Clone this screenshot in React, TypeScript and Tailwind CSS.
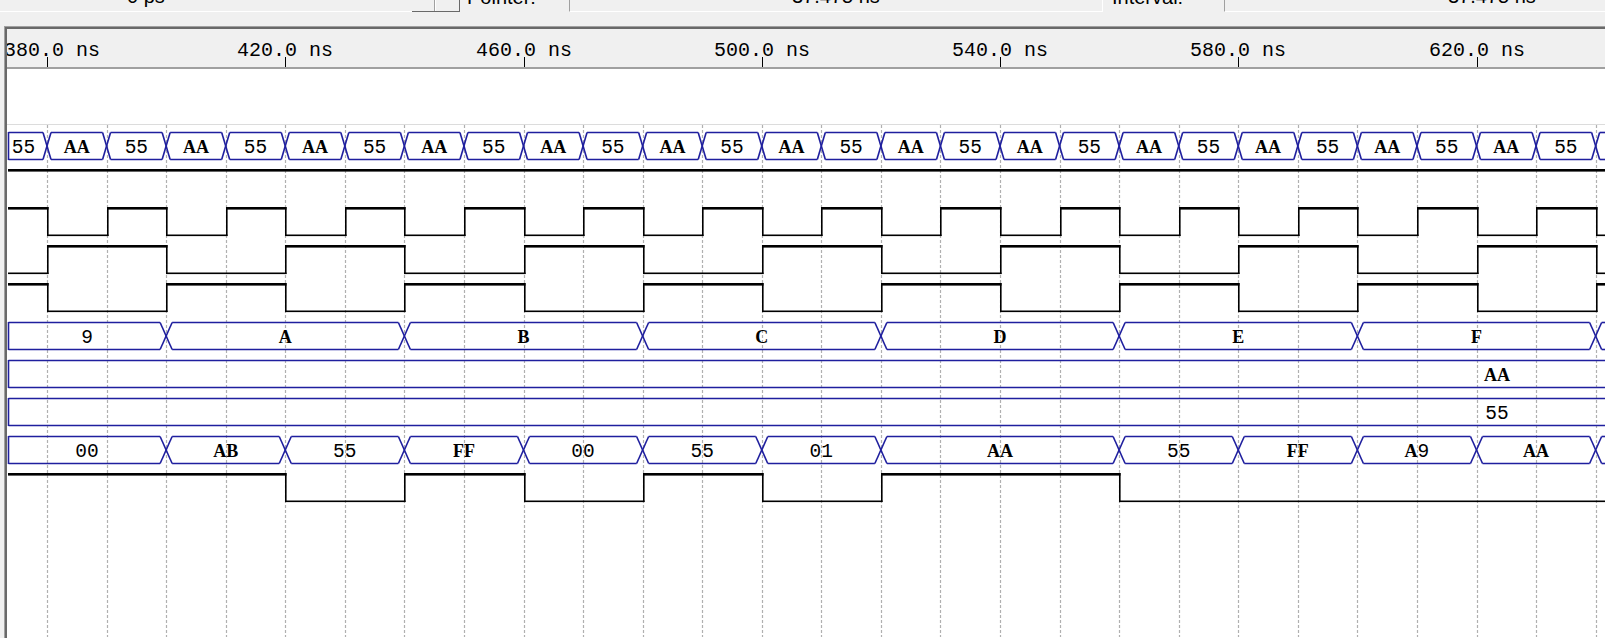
import React from "react";

const K = 238.25 / 40; // px per ns
const T0 = 47; // page x of 380 ns
const xOf = (ns: number) => T0 + (ns - 380) * K;

const CL = 7; // content left (page)
const CT = 70; // canvas top (page)
const PW = 1605;
const CW = PW - CL;
const CH = 638 - CT;
const LEFT = 8; // page x where waveforms start

const BLUE = "#1f1f9e";

type Seg = { a: number; b: number; v: string };

function mkSegs(list: [number, string][], endNs: number): Seg[] {
  const out: Seg[] = [];
  for (let i = 0; i < list.length; i++) {
    const a = list[i][0];
    const b = i + 1 < list.length ? list[i + 1][0] : endNs;
    out.push({ a, b, v: list[i][1] });
  }
  return out;
}

const row0: [number, string][] = [[-Infinity, "55"]];
for (let k = 0; k < 28; k++) row0.push([380 + 10 * k, k % 2 === 0 ? "AA" : "55"]);

const row5: [number, string][] = [
  [-Infinity, "9"],
  [400, "A"],
  [440, "B"],
  [480, "C"],
  [520, "D"],
  [560, "E"],
  [600, "F"],
  [640, "0"],
];

const row8: [number, string][] = [
  [-Infinity, "00"],
  [400, "AB"],
  [420, "55"],
  [440, "FF"],
  [460, "00"],
  [480, "55"],
  [500, "01"],
  [520, "AA"],
  [560, "55"],
  [580, "FF"],
  [600, "A9"],
  [620, "AA"],
  [640, "55"],
];

function Label({ x, y, text }: { x: number; y: number; text: string }) {
  return (
    <text x={x} y={y} textAnchor="middle" fill="#000" fontSize={19.5}>
      {text.split("").map((c, i) =>
        /[A-Z]/.test(c) ? (
          <tspan key={i} fontFamily="'Liberation Serif', serif" fontSize={18} fontWeight={700}>
            {c}
          </tspan>
        ) : (
          <tspan key={i} fontFamily="'Liberation Mono', monospace">
            {c}
          </tspan>
        )
      )}
    </text>
  );
}

function Bus({
  top,
  list,
  endNs,
  h,
  constLabelX,
}: {
  top: number;
  list: [number, string][];
  endNs: number;
  h: number;
  constLabelX?: number;
}) {
  const segs = mkSegs(list, endNs);
  const bot = top + 27;
  const mid = (top + bot) / 2;
  const lines: React.ReactNode[] = [];
  const labels: React.ReactNode[] = [];
  const ox = -CL;
  const oy = -CT;
  segs.forEach((s, i) => {
    const leftIsEdge = !isFinite(s.a) || xOf(s.a) <= LEFT;
    const xa = leftIsEdge ? LEFT : xOf(s.a);
    const xb = Math.min(xOf(s.b), PW + 20);
    if (xa > PW + 10) return;
    const la = leftIsEdge ? xa + 0.5 : xa + h;
    const lb = xb - h;
    lines.push(
      <line key={`t${i}`} x1={la + ox} y1={top + 0.5 + oy} x2={lb + ox} y2={top + 0.5 + oy} />,
      <line key={`b${i}`} x1={la + ox} y1={bot + 0.5 + oy} x2={lb + ox} y2={bot + 0.5 + oy} />
    );
    if (leftIsEdge) {
      lines.push(
        <line key={`e${i}`} x1={LEFT + 0.5 + ox} y1={top + oy} x2={LEFT + 0.5 + ox} y2={bot + 1 + oy} />
      );
    } else {
      lines.push(
        <line key={`x1${i}`} x1={xa - h + ox} y1={top + 0.5 + oy} x2={xa + h + ox} y2={bot + 0.5 + oy} />,
        <line key={`x2${i}`} x1={xa - h + ox} y1={bot + 0.5 + oy} x2={xa + h + ox} y2={top + 0.5 + oy} />
      );
    }
    const visA = Math.max(xa, LEFT);
    const visB = Math.min(xb, PW);
    if (constLabelX !== undefined) {
      labels.push(<Label key={`l${i}`} x={constLabelX + ox} y={mid + 7 + oy} text={s.v} />);
    } else if (visB - visA > 30) {
      let cx = (visA + visB) / 2;
      if (leftIsEdge && visB - visA < 60) cx -= 4;
      labels.push(<Label key={`l${i}`} x={cx + ox} y={mid + 7 + oy} text={s.v} />);
    }
  });
  return (
    <g>
      <g stroke={BLUE} strokeWidth={1.6} fill="none">
        {lines}
      </g>
      {labels}
    </g>
  );
}

function Bit({ high, low, fn }: { high: number; low: number; fn: (ns: number) => boolean }) {
  const ox = -CL;
  const oy = -CT;
  const pts: { x1: number; x2: number; v: boolean }[] = [];
  let start = LEFT;
  let cur = fn(375);
  for (let ns = 380; ns <= 660; ns += 10) {
    const v = fn(ns + 5);
    if (v !== cur) {
      const x = Math.round(xOf(ns));
      pts.push({ x1: start, x2: x, v: cur });
      start = x;
      cur = v;
    }
  }
  pts.push({ x1: start, x2: PW + 5, v: cur });
  const els: React.ReactNode[] = [];
  pts.forEach((p, i) => {
    if (p.v) {
      els.push(
        <rect key={`h${i}`} x={p.x1 + ox} y={high - 1 + oy} width={p.x2 - p.x1 + 1.5} height={2.6} fill="#000" />
      );
    } else {
      els.push(
        <rect key={`l${i}`} x={p.x1 + ox} y={low - 0.5 + oy} width={p.x2 - p.x1 + 1.5} height={1.6} fill="#000" />
      );
    }
    if (i > 0) {
      els.push(
        <rect key={`v${i}`} x={p.x1 + ox} y={high - 1 + oy} width={1.6} height={low - high + 2} fill="#000" />
      );
    }
  });
  return <g>{els}</g>;
}

function Canvas() {
  const ox = -CL;
  const oy = -CT;
  const grid: number[] = [];
  for (let k = -1; k < 28; k++) {
    const x = Math.round(xOf(380 + 10 * k));
    if (x > LEFT && x < PW) grid.push(x);
  }
  return (
    <svg width={CW} height={CH} className="block" shapeRendering="geometricPrecision">
      <line x1={0} y1={125.5 + oy} x2={CW} y2={125.5 + oy} stroke="#dcdcdc" strokeWidth={1} />
      <g stroke="#b0b0b0" strokeWidth={1.2} strokeDasharray="3 2">
        {grid.map((x) => (
          <line key={x} x1={x + 0.5 + ox} y1={126 + oy} x2={x + 0.5 + ox} y2={CH} />
        ))}
      </g>
      <Bus top={133} list={row0} endNs={700} h={4} />
      <rect x={LEFT + ox} y={170 + oy} width={PW} height={2.6} fill="#000" />
      <Bit high={209} low={236} fn={(ns) => (ns > 380 ? Math.floor((ns - 380) / 10) % 2 !== 0 : true)} />
      <Bit high={247} low={274} fn={(ns) => ns > 380 && Math.floor((ns - 380) / 20) % 2 === 0} />
      <Bit high={285} low={312} fn={(ns) => !(ns > 380 && Math.floor((ns - 380) / 20) % 2 === 0)} />
      <Bus top={323} list={row5} endNs={700} h={6} />
      <Bus top={361} list={[[-Infinity, "AA"]]} endNs={900} h={6} constLabelX={1497} />
      <Bus top={399} list={[[-Infinity, "55"]]} endNs={900} h={6} constLabelX={1497} />
      <Bus top={437} list={row8} endNs={700} h={6} />
      <Bit
        high={475}
        low={502}
        fn={(ns) =>
          ns < 420 || (ns > 440 && ns < 460) || (ns > 480 && ns < 500) || (ns > 520 && ns < 560)
        }
      />
    </svg>
  );
}

function Ruler() {
  const labels = [380, 420, 460, 500, 540, 580, 620];
  const ox = -CL;
  return (
    <svg width={CW} height={38} className="block">
      {labels.map((ns, i) => {
        const x = Math.round(xOf(ns));
        const start = i === 0 ? 4 : x - 48;
        return (
          <g key={ns}>
            <text
              x={start + ox}
              y={27}
              fontFamily="'Liberation Mono', monospace"
              fontSize={20}
              fill="#000"
            >
              {ns}.0 ns
            </text>
            <line x1={x + 0.5 + ox} y1={28} x2={x + 0.5 + ox} y2={38} stroke="#000" strokeWidth={1} />
          </g>
        );
      })}
    </svg>
  );
}

function Toolbar() {
  return (
    <div className="h-[26px] shrink-0 flex flex-col">
      <div className="h-[12px] flex items-stretch overflow-hidden font-['Liberation_Sans',Arial,sans-serif] text-[20px] text-black">
        <div className="w-[412px] border-b border-white relative overflow-hidden">
          <div className="absolute left-[127px] bottom-[5px] leading-[20px] whitespace-nowrap">0 ps</div>
        </div>
        <div className="w-[48px] flex border-r border-b border-[#696969]">
          <div className="w-[23px] border-r border-[#a0a0a0] bg-[#f0f0f0]" />
          <div className="flex-1 border-l border-white bg-[#f0f0f0]" />
        </div>
        <div className="w-[109px] relative overflow-hidden">
          <div className="absolute left-[7px] bottom-[5px] leading-[20px] whitespace-nowrap">Pointer:</div>
        </div>
        <div className="w-[534px] border-l border-[#a0a0a0] border-b border-r border-b-white border-r-white relative overflow-hidden">
          <div className="absolute left-[222px] bottom-[5px] leading-[20px] whitespace-nowrap">37.475 ns</div>
        </div>
        <div className="w-[121px] relative overflow-hidden">
          <div className="absolute left-[9px] bottom-[5px] leading-[20px] whitespace-nowrap">Interval:</div>
        </div>
        <div className="flex-1 border-l border-[#a0a0a0] border-b border-b-white relative overflow-hidden">
          <div className="absolute left-[223px] bottom-[5px] leading-[20px] whitespace-nowrap">37.475 ns</div>
        </div>
      </div>
    </div>
  );
}

export default function App() {
  return (
    <div className="w-[1605px] h-[638px] overflow-hidden bg-[#f0f0f0] flex flex-col">
      <Toolbar />
      <div className="flex-1 min-h-0 ml-[4px] border-l border-t border-[#a0a0a0] flex flex-col">
        <div className="flex-1 min-h-0 border-l-2 border-t-2 border-[#696969] flex flex-col">
          <div className="h-[40px] shrink-0 bg-[#f0f0f0] border-b-2 border-b-[#a0a0a0] overflow-hidden">
            <Ruler />
          </div>
          <div className="flex-1 min-h-0 bg-white overflow-hidden">
            <Canvas />
          </div>
        </div>
      </div>
    </div>
  );
}
